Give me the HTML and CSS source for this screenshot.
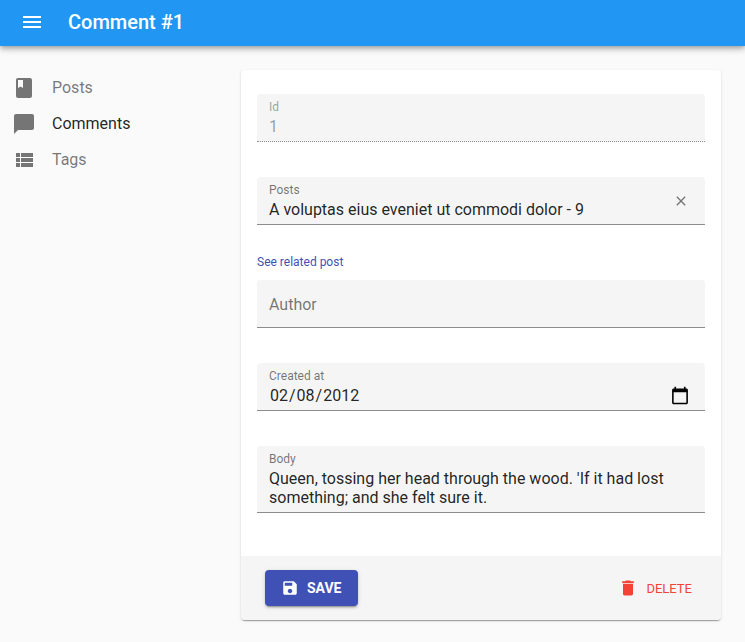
FILE: index.html
```html
<!DOCTYPE html>
<html lang="en-US">
<head>
    <meta charset="UTF-8">
    <meta name="viewport" content="width=device-width, initial-scale=1.0">
    <title>Comment #1</title>
    <link rel="stylesheet" href="styles.css">
</head>
<body>
    <header class="app-bar">
        <button class="menu-button" type="button" aria-label="Toggle menu">
            <svg viewBox="0 0 24 24"><path d="M3 18h18v-2H3v2zm0-5h18v-2H3v2zm0-7v2h18V6H3z"/></svg>
        </button>
        <h1 class="title">Comment #1</h1>
    </header>
    <div class="layout">
        <nav class="sidebar">
            <a class="menu-item" href="#/posts">
                <svg viewBox="0 0 24 24"><path d="M18 2H6c-1.100 0-2 .9-2 2v16c0 1.100.9 2 2 2h12c1.100 0 2-.9 2-2V4c0-1.100-.9-2-2-2zM6 4h5v8l-2.500-1.500L6 12V4z"/></svg>
                Posts
            </a>
            <a class="menu-item active" href="#/comments">
                <svg viewBox="0 0 24 24"><path d="M20 2H4c-1.100 0-1.990.9-1.990 2L2 22l4-4h14c1.100 0 2-.9 2-2V4c0-1.100-.9-2-2-2z"/></svg>
                Comments
            </a>
            <a class="menu-item" href="#/tags">
                <svg viewBox="0 0 24 24"><path d="M4 14h4v-4H4v4zm0 5h4v-4H4v4zM4 9h4V5H4v4zm5 5h12v-4H9v4zm0 5h12v-4H9v4zM9 5v4h12V5H9z"/></svg>
                Tags
            </a>
        </nav>
        <main class="content">
            <form class="card">
                <div class="fields">
                    <div class="field disabled">
                        <label for="id">Id</label>
                        <input id="id" type="text" value="1" disabled>
                    </div>
                    <div class="reference">
                        <div class="field with-clear">
                            <label for="post">Posts</label>
                            <input id="post" type="text" value="A voluptas eius eveniet ut commodi dolor - 9">
                            <button class="clear-button" type="button" aria-label="Clear value">
                                <svg viewBox="0 0 24 24"><path d="M19 6.410L17.590 5 12 10.590 6.410 5 5 6.410 10.590 12 5 17.590 6.410 19 12 13.410 17.590 19 19 17.590 13.410 12z"/></svg>
                            </button>
                        </div>
                        <a class="related-link" href="#/posts/9">See related post</a>
                        <div class="field empty">
                            <label for="author">Author</label>
                            <input id="author" type="text">
                        </div>
                    </div>
                    <div class="field">
                        <label for="created">Created at</label>
                        <input id="created" type="date" value="2012-02-08">
                    </div>
                    <div class="field">
                        <label for="body">Body</label>
                        <textarea id="body" rows="2">Queen, tossing her head through the wood. 'If it had lost something; and she felt sure it.</textarea>
                    </div>
                </div>
                <div class="toolbar">
                    <button class="button save" type="submit">
                        <svg viewBox="0 0 24 24"><path d="M17 3H5c-1.110 0-2 .9-2 2v14c0 1.100.89 2 2 2h14c1.100 0 2-.9 2-2V7l-4-4zm-5 16c-1.660 0-3-1.340-3-3s1.340-3 3-3 3 1.340 3 3-1.340 3-3 3zm3-10H5V5h10v4z"/></svg>
                        SAVE
                    </button>
                    <button class="button delete" type="button">
                        <svg viewBox="0 0 24 24"><path d="M6 19c0 1.100.9 2 2 2h8c1.100 0 2-.9 2-2V7H6v12zM19 4h-3.500l-1-1h-5l-1 1H5v2h14V4z"/></svg>
                        DELETE
                    </button>
                </div>
            </form>
        </main>
    </div>
</body>
</html>
```

FILE: styles.css
```css
* {
    box-sizing: border-box;
}

body {
    margin: 0;
    background: #fafafa;
    color: rgba(0, 0, 0, 0.87);
    font-family: Roboto, "Liberation Sans", sans-serif;
    font-size: 16px;
}

svg {
    display: block;
    flex: none;
    fill: currentColor;
}

button,
input,
textarea {
    font: inherit;
    color: inherit;
    border: 0;
    padding: 0;
    margin: 0;
    background: none;
}

button {
    cursor: pointer;
}

/* top bar */
.app-bar {
    display: flex;
    align-items: center;
    gap: 24px;
    height: 46px;
    padding: 0 20px 2px;
    background: #2196f3;
    color: #fff;
    box-shadow: 0 2px 4px -1px rgba(0, 0, 0, 0.2), 0 4px 5px 0 rgba(0, 0, 0, 0.14), 0 1px 10px 0 rgba(0, 0, 0, 0.12);
}

.menu-button svg {
    width: 24px;
    height: 24px;
}

.title {
    margin: 0;
    font-size: 20px;
    line-height: 32px;
    font-weight: 500;
}

.layout {
    display: flex;
    align-items: flex-start;
    padding: 24px 24px 20px 0;
}

/* sidebar */
.sidebar {
    flex: none;
    width: 241px;
}

.menu-item {
    display: flex;
    align-items: center;
    gap: 16px;
    height: 36px;
    padding: 0 12px;
    line-height: 18px;
    color: rgba(0, 0, 0, 0.54);
    text-decoration: none;
}

.menu-item svg {
    width: 24px;
    height: 24px;
    fill: #757575;
}

.menu-item.active {
    color: rgba(0, 0, 0, 0.87);
}

/* edit form */
.content {
    flex: 1;
    min-width: 0;
}

.card {
    overflow: hidden;
    background: #fff;
    border-radius: 4px;
    box-shadow: 0 2px 1px -1px rgba(0, 0, 0, 0.2), 0 1px 1px 0 rgba(0, 0, 0, 0.14), 0 1px 3px 0 rgba(0, 0, 0, 0.12);
}

.fields {
    display: flex;
    flex-direction: column;
    gap: 35px;
    padding: 24px 16px 43px;
}

.field {
    position: relative;
    display: flex;
    flex-direction: column;
    min-height: 48px;
    padding: 6px 12px 2px;
    background: #f5f5f5;
    border-bottom: 1px solid #8c8c8c;
    border-radius: 4px 4px 0 0;
}

.field label {
    font-size: 12px;
    line-height: 14px;
    color: rgba(0, 0, 0, 0.54);
}

.field input {
    width: 100%;
    height: 25px;
    outline: 0;
}

.field input::-webkit-calendar-picker-indicator {
    width: 20px;
    height: 20px;
    margin-right: 2px;
    padding: 1px;
}

.field textarea {
    display: block;
    width: 100%;
    height: 38px;
    margin: 3px 0;
    line-height: 19px;
    resize: none;
    overflow: hidden;
    outline: 0;
}

.field.disabled {
    border-bottom-style: dotted;
}

.field.disabled label,
.field.disabled input {
    color: rgba(0, 0, 0, 0.38);
}

.field.empty {
    justify-content: flex-end;
}

.field.empty label {
    position: absolute;
    top: 0;
    left: 12px;
    font-size: 16px;
    line-height: 50px;
}

.field.with-clear {
    padding-right: 40px;
}

.clear-button {
    position: absolute;
    top: 16px;
    right: 16px;
}

.clear-button svg {
    width: 16px;
    height: 16px;
    fill: #757575;
}

.related-link {
    display: block;
    padding: 29px 0 9px;
    font-size: 12px;
    line-height: 17px;
    color: #3f51b5;
    text-decoration: none;
}

/* bottom toolbar */
.toolbar {
    display: flex;
    align-items: center;
    justify-content: space-between;
    min-height: 64px;
    padding: 0 24px;
    background: #f5f5f5;
}

.button {
    display: flex;
    align-items: center;
    gap: 8px;
    height: 36px;
    border-radius: 4px;
}

.save {
    padding: 0 16px;
    background: #3f51b5;
    color: #fff;
    font-size: 14px;
    font-weight: 700;
    box-shadow: 0 3px 1px -2px rgba(0, 0, 0, 0.2), 0 2px 2px 0 rgba(0, 0, 0, 0.14), 0 1px 5px 0 rgba(0, 0, 0, 0.12);
}

.save svg {
    width: 18px;
    height: 18px;
}

.delete {
    padding: 0 5px;
    color: #f44336;
    font-size: 13px;
}

.delete svg {
    width: 20px;
    height: 20px;
}
```
